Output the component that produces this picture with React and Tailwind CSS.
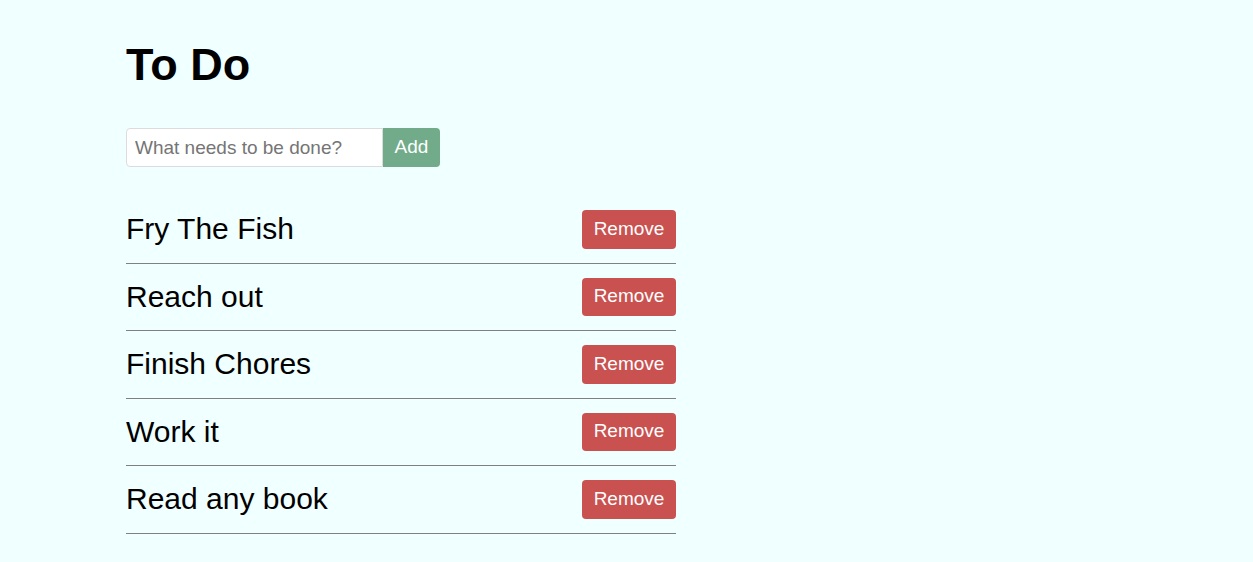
export default function App() {
  const items = ["Fry The Fish", "Reach out", "Finish Chores", "Work it", "Read any book"];
  return (
    <div className="min-h-[562px] bg-[#f0ffff] pl-[126px] pt-[38px]" style={{ fontFamily: '"Liberation Sans", Arial, sans-serif' }}>
      <h1 className="text-[45px] font-bold leading-[54px] text-black">To Do</h1>
      <div className="mt-[36px] flex">
        <input
          placeholder="What needs to be done?"
          className="h-[39px] w-[257px] rounded-l-[4px] border border-[#dcdcdc] bg-white px-[8px] text-[19px] text-black placeholder:text-[#757575] outline-none"
        />
        <button className="h-[39px] w-[57px] rounded-r-[4px] bg-[#72ab8a] text-[19px] text-white">Add</button>
      </div>
      <ul className="mt-[29px] w-[550px]">
        {items.map((t) => (
          <li key={t} className="flex items-center justify-between border-b border-[#808080] py-[14px]">
            <span className="text-[30px] leading-[38px] text-black">{t}</span>
            <button className="h-[38.5px] w-[94px] rounded-[4px] bg-[#c95150] pb-[1px] text-[19px] text-white">Remove</button>
          </li>
        ))}
      </ul>
    </div>
  );
}
